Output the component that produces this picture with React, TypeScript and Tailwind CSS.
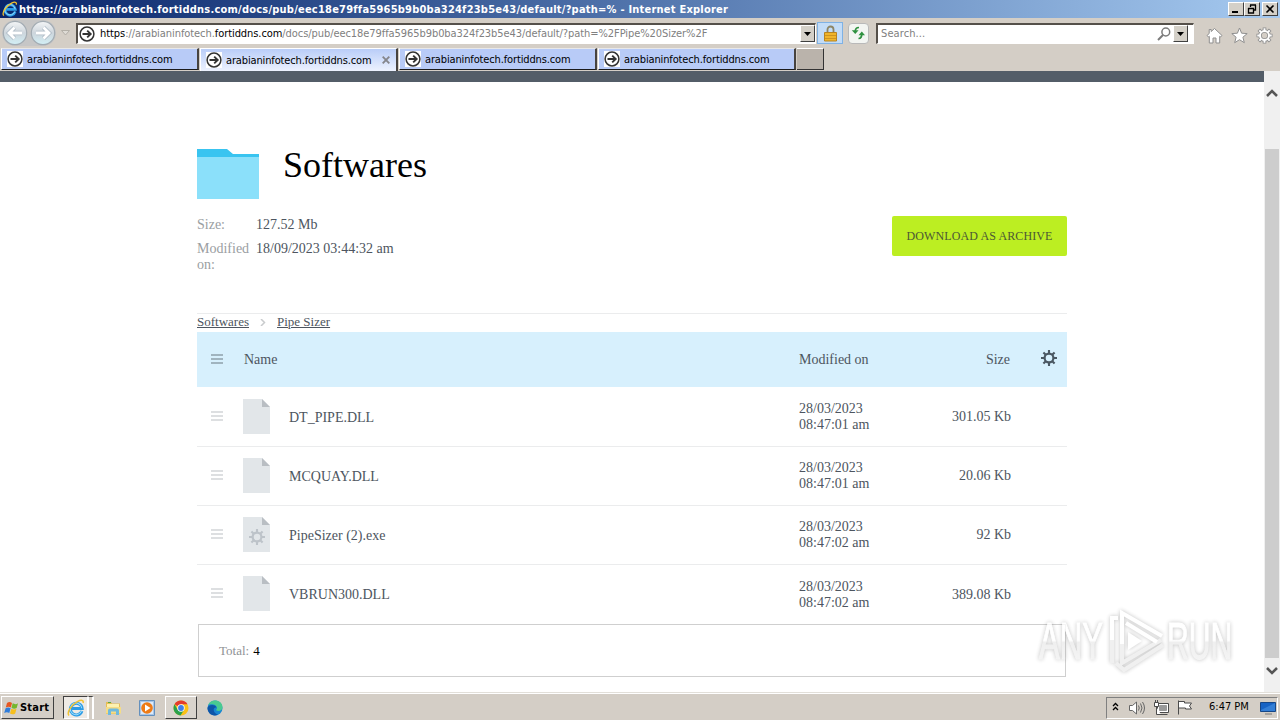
import type { ReactNode } from 'react';

const HOST = 'arabianinfotech.fortiddns.com';

const tabs = [
  { id: 1, active: false },
  { id: 2, active: true },
  { id: 3, active: false },
  { id: 4, active: false },
];

const files = [
  { name: 'DT_PIPE.DLL', date: '28/03/2023', time: '08:47:01 am', size: '301.05 Kb', exe: false },
  { name: 'MCQUAY.DLL', date: '28/03/2023', time: '08:47:01 am', size: '20.06 Kb', exe: false },
  { name: 'PipeSizer (2).exe', date: '28/03/2023', time: '08:47:02 am', size: '92 Kb', exe: true },
  { name: 'VBRUN300.DLL', date: '28/03/2023', time: '08:47:02 am', size: '389.08 Kb', exe: false },
];

function SiteIcon() {
  return (
    <svg className="h-4 w-4 shrink-0 bg-white" viewBox="0 0 16 16" fill="none" stroke="#333">
      <circle cx="8" cy="8" r="6.9" strokeWidth="1.5" />
      <path d="M3.5 8h8M8.2 4.6 11.7 8l-3.5 3.4" strokeWidth="1.9" />
    </svg>
  );
}

function IeIcon({ className }: { className: string }) {
  return (
    <svg className={className} viewBox="0 0 16 16" fill="none">
      <path d="M13.2 10.6A5.2 5.2 0 1 1 13.4 8.4H4.5" stroke="#2b9be6" strokeWidth="2.7" />
      <path d="M13 10.3A5.2 5.2 0 1 1 13.2 8.2" stroke="#9fe0fc" strokeWidth=".9" />
      <path d="M1.8 14.6C-.6 12 3.8 5 9.6 2.1c3.2-1.6 5.4-1 4.7 1.5" stroke="#f2c230" strokeWidth="1.3" />
    </svg>
  );
}

function Gear({ className, color }: { className: string; color: string }) {
  return (
    <svg className={className} viewBox="0 0 16 16" fill="none" stroke={color}>
      <circle cx="8" cy="8" r="4.4" strokeWidth="2.2" />
      <path
        d="M8 0v3.5M8 12.5V16M0 8h3.5M12.5 8H16M2.4 2.4l2.4 2.4M11.2 11.2l2.4 2.4M13.6 2.4l-2.4 2.4M4.8 11.2l-2.4 2.4"
        strokeWidth="2.1"
      />
    </svg>
  );
}

function DropButton() {
  return (
    <div className="flex h-[17px] w-[15px] items-center justify-center border border-t-white border-l-white border-r-[#404040] border-b-[#404040] bg-[#d4d0c8]">
      <svg className="h-1 w-[7px]" viewBox="0 0 7 4"><path d="M0 0h7L3.5 4z" fill="#000" /></svg>
    </div>
  );
}

function CaptionButton({ children }: { children: ReactNode }) {
  return (
    <div className="h-[14px] w-4 border border-t-white border-l-white border-r-[#404040] border-b-[#404040] bg-[#d4d0c8]">
      <svg className="h-3 w-[14px]" viewBox="0 0 14 12" fill="none" stroke="#000">{children}</svg>
    </div>
  );
}

function TitleBar() {
  return (
    <div className="flex h-[18px] items-center bg-linear-to-r from-[#0a246a] to-[#a6caf0] pl-0.5 pr-[2px]">
      <IeIcon className="h-4 w-4 shrink-0" />
      <span className="ml-px grow whitespace-nowrap pt-px text-[11px] leading-[17px] font-bold tracking-[0.225px] text-white">
        https://arabianinfotech.fortiddns.com/docs/pub/eec18e79ffa5965b9b0ba324f23b5e43/default/?path=% - Internet Explorer
      </span>
      <CaptionButton><path d="M3 9h6" strokeWidth="2" /></CaptionButton>
      <CaptionButton><path d="M5 2h6M5.5 2v2M10.5 2v5H9M3 5.5h6M3.5 5v5h5V5" strokeWidth="1.3" /></CaptionButton>
      <div className="ml-[2px]"><CaptionButton><path d="m3.5 2.5 7 7m0-7-7 7" strokeWidth="1.6" /></CaptionButton></div>
    </div>
  );
}

function NavButton({ flip }: { flip?: boolean }) {
  return (
    <svg className={flip ? 'h-[26px] w-[26px] rotate-180' : 'h-[26px] w-[26px]'} viewBox="0 0 26 26" fill="none">
      <circle cx="13" cy="13" r="11.7" fill={flip ? 'url(#navFlip)' : 'url(#nav)'} stroke="#a3acb3" strokeWidth="1.2" />
      <path d="M20 13H8M12.5 7.5 7 13l5.5 5.5" stroke="#aebbc6" strokeWidth="4.4" />
      <path d="M20 13H8M12.5 7.5 7 13l5.5 5.5" stroke="#fff" strokeWidth="2.8" />
      <defs>
        <linearGradient id="nav" x1="0" y1="0" x2="0" y2="1">
          <stop stopColor="#f4f6f7" /><stop offset=".5" stopColor="#cdd5dc" /><stop offset="1" stopColor="#d3f0f6" />
        </linearGradient>
        <linearGradient id="navFlip" x1="0" y1="1" x2="0" y2="0">
          <stop stopColor="#f4f6f7" /><stop offset=".5" stopColor="#cdd5dc" /><stop offset="1" stopColor="#d3f0f6" />
        </linearGradient>
      </defs>
    </svg>
  );
}

function AddressBar() {
  return (
    <div className="flex h-[30px] items-center pl-0.5 text-[11px] text-[#808080]">
      <div className="flex gap-0.5 rounded-full bg-[#c6c6c6]">
        <NavButton />
        <NavButton flip />
      </div>
      <svg className="ml-[5px] h-[6px] w-[9px]" viewBox="0 0 9 6"><path d="M.5.5h8L4.5 5z" fill="#dedbd5" stroke="#b3afa7" /></svg>
      <div className="ml-[6px] flex h-[21px] w-[740px] items-center border border-t-2 border-l-2 border-t-[#55504a] border-l-[#55504a] border-r-white border-b-white bg-white pl-px">
        <SiteIcon />
        <span className="ml-[5px] grow whitespace-nowrap pt-[2px] -tracking-[0.07px]">
          <span className="text-black">https</span>://arabianinfotech.<span className="text-black">fortiddns.com</span>
          /docs/pub/eec18e79ffa5965b9b0ba324f23b5e43/default/?path=%2FPipe%20Sizer%2F
        </span>
        <DropButton />
      </div>
      <div className="ml-px flex h-[22px] w-[26px] items-center justify-center border border-[#7fb2e5] bg-[#c3dcf7]">
        <svg className="h-[17px] w-[15px]" viewBox="0 0 15 17" fill="none">
          <path d="M4.5 8V4.5a3 3 0 0 1 6 0V8" stroke="#8d8566" strokeWidth="1.8" />
          <path d="M1.5 7.5h12v8.5h-12z" fill="#f0b52b" stroke="#b88420" />
          <path d="M2 10.5h11M2 13.5h11" stroke="#cf9420" />
        </svg>
      </div>
      <div className="ml-[5px] flex h-[21px] w-[21px] items-center justify-center rounded-sm border border-[#b9b9b9] bg-[#f3f5f2]">
        <svg className="h-[14px] w-[15px]" viewBox="0 0 15 14" fill="none" stroke="#2f9140" strokeWidth="1.7">
          <path d="M8 1.5C5 1.5 4.2 3 4.2 6M7.5 12.5c2.5 0 3.3-1.5 3.3-5" />
          <path d="M.8 4.2h6.8L4.2 8zM7.5 9.3H14l-3.2-3.8z" fill="#2f9140" stroke="none" />
        </svg>
      </div>
      <div className="ml-[7px] flex h-[21px] w-[318px] items-center border border-t-2 border-l-2 border-t-[#55504a] border-l-[#55504a] border-r-white border-b-white bg-white pl-[3px] pr-[5px]">
        <span className="grow pt-[2px] tracking-[0.1px]">Search...</span>
        <svg className="mr-[2px] h-[14px] w-[14px]" viewBox="0 0 14 14" fill="none" stroke="#7b7b7b">
          <circle cx="8.8" cy="5" r="3.9" strokeWidth="1.5" />
          <path d="M6 8 1 13" strokeWidth="2" />
        </svg>
        <DropButton />
      </div>
      <div className="ml-[12px] flex items-center gap-[8px] pt-1">
        <svg className="h-[17px] w-[17px]" viewBox="0 0 17 17" fill="#fff" stroke="#8f8f8f">
          <path d="m8.5 1.5 7.5 7-1.5 1.5-.8-.7V16H10v-5H7v5H3.3V9.3l-.8.7L1 8.5l2.2-2v-4h2v2z" />
        </svg>
        <svg className="h-[17px] w-[17px]" viewBox="0 0 17 17" fill="#fff" stroke="#8f8f8f">
          <path d="m8.5 1 2.1 5.2 5.6.4-4.3 3.6 1.4 5.5-4.8-3-4.8 3 1.4-5.5L.8 6.6l5.6-.4z" />
        </svg>
        <svg className="h-[17px] w-[17px]" viewBox="0 0 17 17" fill="none">
          <g stroke="#8f8f8f" strokeWidth="3.6">
            <circle cx="8.5" cy="8.5" r="4.5" />
            <path d="M8.5.5v3M8.5 13.5v3M.5 8.5h3M13.5 8.5h3M2.8 2.8 5 5M12 12l2.2 2.2M14.2 2.8 12 5M5 12l-2.2 2.2" />
          </g>
          <g stroke="#fff" strokeWidth="1.9">
            <circle cx="8.5" cy="8.5" r="4.5" />
            <path d="M8.5 1.3v3M8.5 12.7v3M1.3 8.5h3M12.7 8.5h3M3.3 3.3 5 5M12 12l1.7 1.7M13.7 3.3 12 5M5 12l-1.7 1.7" />
          </g>
        </svg>
      </div>
    </div>
  );
}

function TabStrip() {
  return (
    <div className="flex h-[23px] items-start gap-px pl-px text-[11px] text-black">
      {tabs.map((tab) => (
        <div
          key={tab.id}
          className={
            tab.active
              ? 'flex h-[23px] w-[198px] items-center border-l border-r-2 border-t border-l-white border-t-white border-r-[#47433f] bg-linear-to-b from-[#b9cdf8] to-[#edf2fe] pl-[5px]'
              : 'flex h-[22px] w-[198px] items-center border-b border-l border-r-2 border-t border-l-white border-t-[#e8e8e8] border-r-[#47433f] border-b-[#1b1b1b] bg-[#b8cbf7] pl-[5px]'
          }
        >
          <SiteIcon />
          <span className="ml-[4px] whitespace-nowrap pt-[3px] -tracking-[0.14px]">{HOST}</span>
          {tab.active && (
            <svg className="ml-auto mr-[6px] h-2 w-2" viewBox="0 0 8 8" stroke="#85868c" strokeWidth="1.9"><path d="m.7.7 6.6 6.6m0-6.6L.7 7.3" /></svg>
          )}
        </div>
      ))}
      <div className="h-[22px] w-[27px] border-b border-r border-t border-t-white border-r-[#333] border-b-[#333] bg-[#bab3ab]" />
    </div>
  );
}

function Bars({ className }: { className: string }) {
  return (
    <svg className={className} viewBox="0 0 12 10"><path d="M0 1h12M0 5h12M0 9h12" stroke="currentColor" strokeWidth="1.5" /></svg>
  );
}

function FileIcon({ exe }: { exe: boolean }) {
  return (
    <div className="grid h-[35px] w-[27px]">
      <svg className="col-start-1 row-start-1 h-[35px] w-[27px]" viewBox="0 0 27 35">
        <path d="M0 0h19l8 8v27H0z" fill="#e2e6e9" />
        <path d="M19 0v8h8z" fill="#b9bec3" />
      </svg>
      {exe && <Gear className="col-start-1 row-start-1 mt-3 ml-[6px] h-4 w-4" color="#bdc3c9" />}
    </div>
  );
}

function FileRow({ file, first, last }: { file: (typeof files)[number]; first: boolean; last: boolean }) {
  return (
    <div className={first ? 'flex h-[59px] items-center border-t border-transparent' : 'flex h-[59px] items-center border-t border-[#ebeced]'}>
      <Bars className="mb-[2px] ml-[14px] h-[10px] w-3 text-[#d2d5d8]" />
      <div className="mb-px ml-[20px]"><FileIcon exe={file.exe} /></div>
      <div className="ml-[19px] w-[510px] pt-[2px]">{file.name}</div>
      <div className={last ? 'w-[113px] pt-[2px] leading-4' : 'w-[113px] leading-4'}>
        <p>{file.date}</p>
        <p>{file.time}</p>
      </div>
      <div className={last ? 'w-[99px] pt-[2px] text-right' : 'w-[99px] text-right'}>{file.size}</div>
    </div>
  );
}

function DocsPage() {
  return (
    <div className="min-w-0 grow bg-white font-['Liberation_Serif',serif] text-sm text-[#4d5560]">
      <div className="h-[11px] bg-[#535d68]" />
      <div className="ml-[197px] w-[870px]">
        <div className="flex h-[134px] items-start pt-[67px]">
          <svg className="h-[50px] w-[62px]" viewBox="0 0 62 50">
            <path d="M0 0h30l6 5h26v10H0z" fill="#39c4f0" />
            <path d="M0 8h62v42H0z" fill="#8be0fa" />
          </svg>
          <h1 className="ml-[24px] mt-[-4px] text-4xl leading-10 text-black">Softwares</h1>
        </div>
        <div className="flex h-[97px] justify-between">
          <div className="pt-px leading-4">
            <div className="flex">
              <span className="w-[59px] text-[#9a9ea2]">Size:</span>
              <span>127.52 Mb</span>
            </div>
            <div className="mt-2 flex">
              <span className="w-[59px] pr-1 text-[#9a9ea2]">Modified on:</span>
              <span>18/09/2023 03:44:32 am</span>
            </div>
          </div>
          <button className="h-10 w-[175px] rounded-xs bg-[#bcee22] text-xs tracking-[0.1px] text-[#4b5735]">DOWNLOAD AS ARCHIVE</button>
        </div>
        <div className="flex h-[19px] items-center border-t border-[#ebeced] pb-[2px] text-[13px] leading-4">
          <span className="underline">Softwares</span>
          <svg className="mx-[11px] h-[7px] w-[6px]" viewBox="0 0 6 7" fill="none" stroke="#c9cbcd" strokeWidth="1.5"><path d="m1 0 3.5 3.5L1 7" /></svg>
          <span className="underline">Pipe Sizer</span>
        </div>
        <div className="flex h-[55px] items-center bg-[#d7f0fd]">
          <Bars className="mb-[2px] ml-[14px] h-[10px] w-3 text-[#8fa0ab]" />
          <span className="ml-[21px] w-[555px]">Name</span>
          <span className="w-[113px]">Modified on</span>
          <span className="w-[98px] text-right">Size</span>
          <Gear className="ml-[31px] mb-[3px] h-4 w-4" color="#4b5863" />
        </div>
        {files.map((file, i) => (
          <FileRow key={file.name} file={file} first={i === 0} last={i === files.length - 1} />
        ))}
        <div className="mx-px mt-px flex h-[53px] items-center border border-[#cfcfcf] pl-5 pt-[2px] text-[13px]">
          <span className="text-[#8f9296]">Total:</span>
          <span className="ml-[4px] text-black">4</span>
        </div>
      </div>
    </div>
  );
}

function ScrollBar() {
  return (
    <div className="flex w-4 flex-col items-center bg-[#f0f0f0]">
      <svg className="mt-[18px] h-[8px] w-[12px]" viewBox="0 0 12 8" fill="none" stroke="#555" strokeWidth="2.5"><path d="m1 7 5-5 5 5" /></svg>
      <div className="mt-[52px] h-[509px] w-[14px] bg-[#cdcdcd]" />
      <svg className="mt-[9px] h-[8px] w-[12px]" viewBox="0 0 12 8" fill="none" stroke="#555" strokeWidth="2.5"><path d="m1 1 5 5 5-5" /></svg>
    </div>
  );
}

function Watermark() {
  return (
    <svg
      className="absolute left-[1030px] top-[600px] h-20 w-[212px] overflow-visible opacity-80 drop-shadow-[0_0_2px_rgba(0,0,0,0.3)]"
      viewBox="0 0 212 80"
      fill="none"
    >
      <defs>
        <linearGradient id="mark" gradientUnits="userSpaceOnUse" x1="0" y1="-36" x2="0" y2="0">
          <stop offset=".48" stopColor="#fff" /><stop offset=".54" stopColor="#ececec" /><stop offset="1" stopColor="#f2f2f2" />
        </linearGradient>
      </defs>
      <g fill="url(#mark)" stroke="url(#mark)" fontFamily="'Liberation Sans',sans-serif" fontSize="51">
        <text transform="translate(9 59) scale(.61 1)">ANY</text>
        <text transform="translate(137 59) scale(.59 1)">RUN</text>
      </g>
      <path d="M92 44V13l40 23" stroke="#fff" strokeWidth="4" />
      <path d="M92 44v19l39-23M82 19v44M86 63l8 7 39-25" stroke="#ededed" strokeWidth="4" />
      <path d="M82 40V18h6M96 23l31 19" stroke="#fff" strokeWidth="4" />
      <path d="m98 32 14 9-14 9z" fill="#fff" />
    </svg>
  );
}

function TaskBar() {
  return (
    <div className="flex h-7 items-center border-t border-[#e2dfd9] bg-[#d4cec6] pl-px pr-[2px] text-[11px] text-black shadow-[inset_0_1px_0_#fff]">
      <div className="mt-[2px] flex h-[23px] w-[53px] items-center border border-t-white border-l-white border-r-[#404040] border-b-[#404040] bg-[#d4cec6] pl-[2px] font-bold">
        <svg className="h-4 w-4 shrink-0" viewBox="0 0 16 16">
          <path d="M3 3c2-1.5 3.5-1 5 0L6.8 7.5c-1.5-1-3-1-5 0z" fill="#e65722" />
          <path d="M8.7 3.3c1.8 1 3.3 1.2 5.3 0L12.7 8c-2 1-3.5.8-5.2-.2z" fill="#74b72e" />
          <path d="M1.6 8.3c2-1.3 3.5-1 5 0L5.3 13c-1.5-1-3.2-1.2-5.1 0z" fill="#2f7ddb" />
          <path d="M7.3 8.7c1.7 1 3.2 1.2 5.2.1l-1.3 4.7c-2 1.2-3.6 1-5.2 0z" fill="#f6bf1d" />
        </svg>
        <span className="pt-px tracking-[0.2px]">Start</span>
      </div>
      <div className="ml-[9px] mt-[2px] flex h-[23px] w-[25px] items-center justify-center border border-t-[#404040] border-l-[#404040] border-r-white border-b-white bg-[#eeeae5]">
        <IeIcon className="h-[18px] w-[18px]" />
      </div>
      <div className="mt-[2px] h-[23px] w-[6px] border-r-2 border-l border-white border-t border-t-[#404040]" />
      <svg className="ml-[11px] mt-[2px] h-4 w-[17px]" viewBox="0 0 17 16">
        <path d="M1 2h5l1 1.5h8V14H1z" fill="#e6bd55" />
        <path d="M2 4h12v5H2z" fill="#fdf1b0" />
        <path d="M1 7h15v6.5H1z" fill="#f5dc86" />
        <path d="M3 15v-4.5q0-2 2-2h7q2 0 2 2V15h-3v-3.5H6V15z" fill="#6fb9dd" />
        <path d="M3 2.5h3" stroke="#58a847" />
      </svg>
      <svg className="ml-[17px] mt-[2px] h-4 w-4" viewBox="0 0 16 16">
        <path d="M.5.5h15v15H.5z" fill="#a8c6e7" stroke="#6490bd" />
        <path d="M2 2h12v12H2z" fill="#dceafa" />
        <circle cx="8" cy="8" r="5.8" fill="#ee7b16" />
        <path d="M6 4.5 11.5 8 6 11.5z" fill="#fff" />
      </svg>
      <div className="ml-[10px] mt-[2px] flex h-[23px] w-8 items-center justify-center border border-t-white border-l-white border-r-[#404040] border-b-[#404040] bg-[#d9d4cd]">
        <svg className="h-4 w-4" viewBox="0 0 16 16">
          <circle cx="8" cy="8" r="7.5" fill="#fbc116" />
          <path d="M8 8 1.5 4.25a7.5 7.5 0 0 1 13 0H8z" fill="#e33b2e" />
          <path d="M1.5 4.25a7.5 7.5 0 0 0 6 11.25l3.7-5.7H4.7z" fill="#2aa14c" />
          <circle cx="8" cy="8" r="3.7" fill="#fff" />
          <circle cx="8" cy="8" r="2.9" fill="#3f7fe8" />
        </svg>
      </div>
      <svg className="ml-[10px] mt-[2px] h-4 w-4" viewBox="0 0 16 16">
        <circle cx="8" cy="8" r="7.5" fill="#1785d2" />
        <path d="M1 5.5C3-1.5 15-1 15.5 7c.2 4-4 4.5-6 3.5-1-.7.5-1.2.5-2.5C10 5 4 3 1 5.500z" fill="#49ca91" />
        <path d="M.5 8C1 4.5 8 4 9.5 7.5 6 6.500 5 12.500 11 14.800 5 17 .5 13 .5 8z" fill="#0e55a8" />
      </svg>
      <div className="ml-auto mt-[2px] flex h-[22px] w-[172px] items-center border border-t-[#808080] border-l-[#808080] border-r-white border-b-white pl-[5px]">
        <svg className="mb-[3px] h-[9px] w-[7px]" viewBox="0 0 7 9" fill="none" stroke="#000" strokeWidth="1.3"><path d="m1 4 2.5-2.5L6 4M1 8l2.5-2.5L6 8" /></svg>
        <svg className="ml-[10px] h-[14px] w-4" viewBox="0 0 16 14" fill="none" stroke="#666">
          <path d="M.5 4.5h3l4-3.5v12l-4-3.500h-3z" fill="#fff" />
          <path d="M9.5 4.5q1.5 2.5 0 5M11.5 2.5q3 4.5 0 9M13.5 1q4 6 0 12" />
        </svg>
        <svg className="ml-[8px] h-4 w-4" viewBox="0 0 16 16" fill="#fff" stroke="#4b4b4b">
          <path d="M4.5 3.5h11v9h-11z" />
          <path d="M6.5 5.5h7v5h-7z" fill="#999" stroke="#999" />
          <path d="M7.5 14.5h7M3.5 7v7.5H8" />
          <path d="M1.5 2.5h4v4h-4zM2.5 0v2M4.5 0v2" />
        </svg>
        <svg className="ml-[8px] h-[15px] w-4" viewBox="0 0 16 15" fill="#fff" stroke="#4b4b4b">
          <path d="M1.5.5v14M1.5 1.5h6V3h7l-2 3 2 3h-6V8h-7" />
        </svg>
        <span className="ml-[16px] whitespace-nowrap">6:47 PM</span>
        <svg className="ml-auto mr-px h-[14px] w-4" viewBox="0 0 16 14">
          <path d="M.5 1.5h15v9H.5z" fill="#1763c4" stroke="#164787" />
          <path d="m1 9 14-7v8H1z" fill="#347fd6" />
          <path d="M5 13h7" stroke="#777" />
        </svg>
      </div>
    </div>
  );
}

export default function App() {
  return (
    <div className="relative flex h-[720px] w-[1280px] flex-col overflow-hidden bg-[#d4cec6] font-['DejaVu_Sans_Condensed','DejaVu_Sans',sans-serif]">
      <TitleBar />
      <AddressBar />
      <TabStrip />
      <div className="flex h-[621px]">
        <DocsPage />
        <ScrollBar />
      </div>
      <TaskBar />
      <Watermark />
    </div>
  );
}
